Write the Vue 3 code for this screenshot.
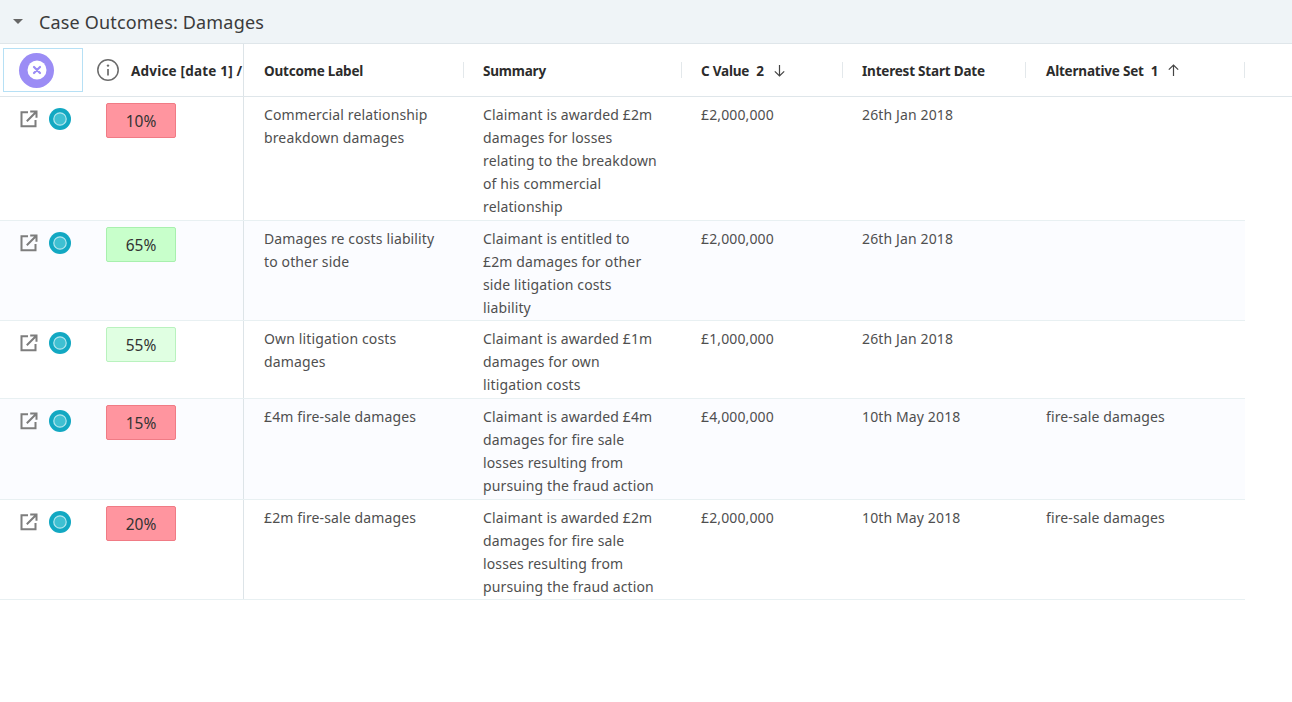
<script setup>
const headers = [
  { label: 'Outcome Label' },
  { label: 'Summary' },
  { label: 'C Value', rank: 2, dir: 'down' },
  { label: 'Interest Start Date' },
  { label: 'Alternative Set', rank: 1, dir: 'up' }
]
const rows = [
  { pct: '10%', tone: 'red', h: 124, label: 'Commercial relationship breakdown damages', summary: ['Claimant is awarded £2m', 'damages for losses', 'relating to the breakdown', 'of his commercial', 'relationship'], value: '£2,000,000', date: '26th Jan 2018', alt: '' },
  { pct: '65%', tone: 'green', h: 100, alt_bg: true, label: 'Damages re costs liability to other side', summary: ['Claimant is entitled to', '£2m damages for other', 'side litigation costs', 'liability'], value: '£2,000,000', date: '26th Jan 2018', alt: '' },
  { pct: '55%', tone: 'pale', h: 78, label: 'Own litigation costs damages', summary: ['Claimant is awarded £1m', 'damages for own', 'litigation costs'], value: '£1,000,000', date: '26th Jan 2018', alt: '' },
  { pct: '15%', tone: 'red', h: 101, alt_bg: true, label: '£4m fire-sale damages', summary: ['Claimant is awarded £4m', 'damages for fire sale', 'losses resulting from', 'pursuing the fraud action'], value: '£4,000,000', date: '10th May 2018', alt: 'fire-sale damages' },
  { pct: '20%', tone: 'red', h: 100, label: '£2m fire-sale damages', summary: ['Claimant is awarded £2m', 'damages for fire sale', 'losses resulting from', 'pursuing the fraud action'], value: '£2,000,000', date: '10th May 2018', alt: 'fire-sale damages' }
]
</script>

<template>
  <div class="page">
    <div class="section">
      <span class="caret"></span>
      <span class="title">Case Outcomes: Damages</span>
    </div>
    <div class="table">
      <div class="head row-grid">
        <div class="fixed head-fixed">
          <div class="selector">
            <span class="clear">
              <svg width="20" height="20" viewBox="0 0 20 20">
                <circle cx="10" cy="10" r="9.500" fill="#fff" />
                <path d="M7 7l6 6M13 7l-6 6" stroke="#9b8cf5" stroke-width="2.200" stroke-linecap="round" />
              </svg>
            </span>
          </div>
          <svg class="info" width="24" height="24" viewBox="0 0 24 24" fill="none">
            <circle cx="12" cy="12" r="10.200" stroke="#6b6b6b" stroke-width="1.500" />
            <path d="M12 11v6.500" stroke="#6b6b6b" stroke-width="1.700" />
            <circle cx="12" cy="7.600" r="1.200" fill="#6b6b6b" />
          </svg>
          <span class="advice">Advice [date 1] /</span>
        </div>
        <div v-for="h in headers" :key="h.label" class="head-cell">
          <span class="head-label">{{ h.label }}</span>
          <span v-if="h.rank" class="rank">{{ h.rank }}</span>
          <svg v-if="h.dir" class="arrow" :class="{ up: h.dir === 'up' }" width="13" height="13" viewBox="0 0 13 13" fill="none">
            <path d="M6.500 1v11M1.800 7.300l4.700 4.700 4.700-4.700" stroke="#444" stroke-width="1.200" />
          </svg>
        </div>
      </div>
      <div
        v-for="r in rows"
        :key="r.pct"
        class="row row-grid"
        :class="{ shaded: r.alt_bg }"
        :style="{ height: r.h + 'px' }"
      >
        <div class="fixed body-fixed">
          <svg class="open" width="18" height="18" viewBox="0 0 18 18" fill="none">
            <path d="M8 2.200H1.500v14h14V10" stroke="#7d7d7d" stroke-width="2" />
            <path d="M6.800 11.200L15.800 2.200M10.200 1.500h6.300v6.300" stroke="#7d7d7d" stroke-width="2" />
          </svg>
          <svg class="status" width="22" height="22" viewBox="0 0 22 22">
            <circle cx="11" cy="11" r="11" fill="#12a8c2" />
            <circle cx="11" cy="11" r="6.200" fill="#3fc0d2" stroke="#b4e6ee" stroke-width="1.200" />
          </svg>
          <span class="pct" :class="r.tone">{{ r.pct }}</span>
        </div>
        <div class="cell">{{ r.label }}</div>
        <div class="cell">
          <div v-for="line in r.summary" :key="line" class="line">{{ line }}</div>
        </div>
        <div class="cell">{{ r.value }}</div>
        <div class="cell">{{ r.date }}</div>
        <div class="cell">{{ r.alt }}</div>
      </div>
    </div>
  </div>
</template>

<style scoped>
.page {
  width: 1292px;
  height: 702px;
  background: #fff;
  font-family: "Noto Sans", "Open Sans", sans-serif;
  overflow: hidden;
  color: #4a4a4a;
}
.section {
  height: 43px;
  background: #eff4f7;
  border-bottom: 1px solid #dfe6ea;
  display: flex;
  align-items: center;
  box-sizing: content-box;
  padding-left: 13px;
}
.caret {
  width: 0;
  height: 0;
  border-left: 5px solid transparent;
  border-right: 5px solid transparent;
  border-top: 5px solid #666;
  margin-right: 16px;
}
.title {
  font-size: 18px;
  color: #3b3b3b;
  letter-spacing: 0.17px;
}
.table {
  width: 1245px;
}
.row-grid {
  display: grid;
  grid-template-columns: 244px 219px 218px 161px 184px 219px;
}
.head {
  height: 53px;
  border-bottom: 1px solid #dfe6ea;
  width: 1292px;
  box-sizing: border-box;
}
.fixed {
  border-right: 1px solid #dde4e8;
  box-sizing: border-box;
}
.head-fixed {
  display: flex;
  align-items: center;
  padding-left: 3px;
}
.selector {
  width: 80px;
  height: 44px;
  border: 1px solid #b6e0f5;
  box-sizing: border-box;
  display: flex;
  align-items: center;
  padding-left: 15px;
}
.clear {
  width: 35px;
  height: 35px;
  border-radius: 50%;
  background: #9b8cf5;
  display: flex;
  align-items: center;
  justify-content: center;
}
.info {
  margin-left: 13px;
  flex: none;
}
.advice {
  margin-left: 11px;
  padding-top: 2px;
  font-size: 13.500px;
  font-weight: 700;
  color: #2c2c2c;
  white-space: nowrap;
  letter-spacing: 0.2px;
}
.head-cell {
  position: relative;
  display: flex;
  align-items: center;
  padding-left: 20px;
  padding-top: 2px;
  font-size: 13.500px;
  font-weight: 700;
  color: #2c2c2c;
  letter-spacing: -0.2px;
  white-space: nowrap;
}
.head-cell::after {
  content: "";
  position: absolute;
  right: -1px;
  top: 18px;
  height: 16px;
  width: 1px;
  background: #e3e8eb;
}
.head-cell:nth-child(n+5)::after {
  right: 0;
}
.rank {
  margin-left: 7px;
}
.arrow {
  margin-left: 9px;
  margin-top: -2px;
}
.arrow.up {
  transform: rotate(180deg);
}
.row {
  border-bottom: 1px solid #e8f0f2;
  box-sizing: border-box;
}
.row.shaded {
  background: #fbfcff;
}
.body-fixed {
  display: flex;
  align-items: flex-start;
  padding: 6px 0 0 20px;
  position: relative;
}
.open {
  margin-top: 7px;
}
.status {
  margin: 5px 0 0 11px;
}
.pct {
  position: absolute;
  left: 106px;
  top: 6px;
  width: 70px;
  height: 35px;
  box-sizing: border-box;
  border-radius: 2px;
  display: flex;
  align-items: center;
  justify-content: center;
  font-size: 15.500px;
  color: #333;
  padding-top: 1px;
}
.pct.red {
  background: #ff959f;
  border: 1px solid #f07b85;
}
.pct.green {
  background: #c8ffcb;
  border: 1px solid #a8f0ae;
}
.pct.pale {
  background: #e0ffe2;
  border: 1px solid #b9f2be;
}
.cell {
  padding: 6px 20px 0;
  font-size: 14px;
  line-height: 23px;
  color: #4f4f4f;
  letter-spacing: 0.13px;
}
.line {
  white-space: nowrap;
}
</style>
